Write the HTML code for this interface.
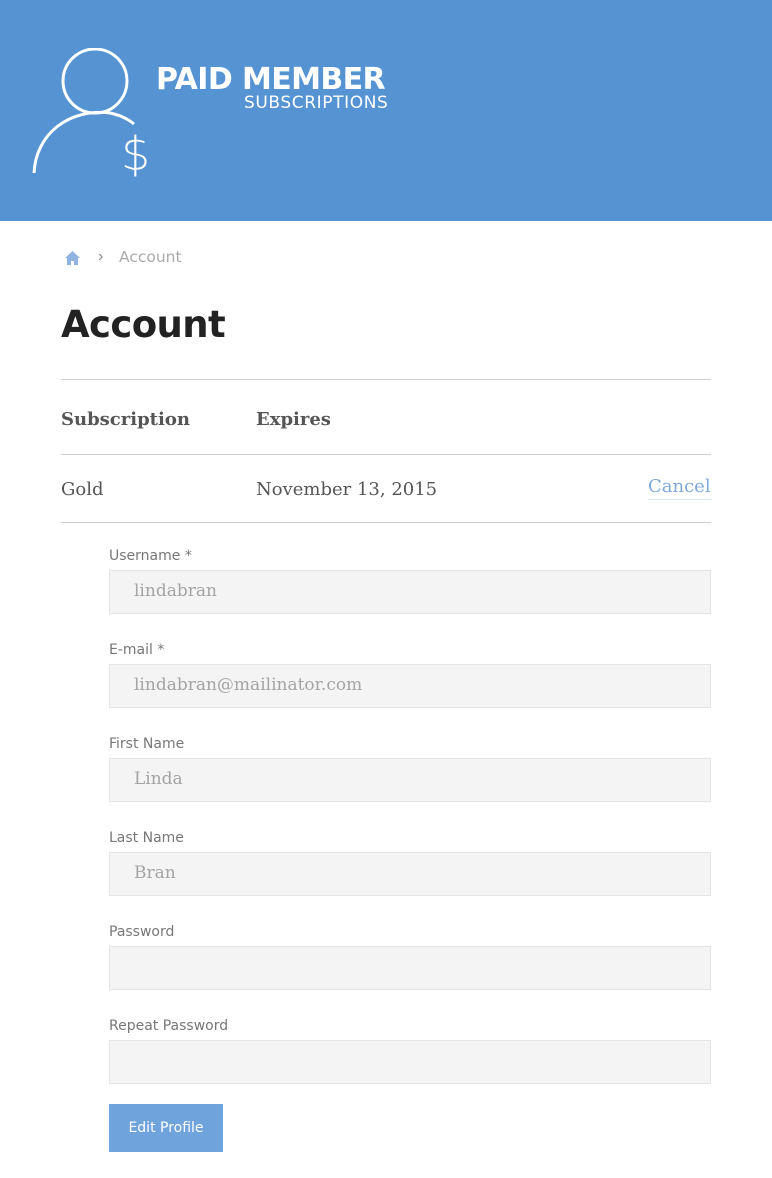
<!DOCTYPE html>
<html><head><meta charset="utf-8"><style>
*{margin:0;padding:0;box-sizing:border-box}
body{width:772px;height:1178px;background:#fff;font-family:"Liberation Sans",sans-serif;position:relative;overflow:hidden}
.hdr{position:absolute;left:0;top:0;width:772px;height:221px;background:#5593d3}
.abs{position:absolute}
.serif{font-family:"DejaVu Serif","Liberation Serif",serif}
.line{position:absolute;left:61px;width:650px;height:1px;background:#cfcfcf}
.lbl{position:absolute;left:109px;color:#777;font-family:"DejaVu Sans","Liberation Sans",sans-serif;font-size:14px}
.inp{position:absolute;left:109px;width:602px;height:44px;background:#f4f4f4;border:1px solid #e4e4e4;font-family:"DejaVu Serif",serif;font-size:17px;color:#a4a4a4;padding:10px 24px}
</style></head><body>
<div class="hdr">
<svg class="abs" style="left:30px;top:48px" width="130" height="130" viewBox="0 0 130 130">
<circle cx="65" cy="33" r="32" fill="none" stroke="#fff" stroke-width="3"/>
<path d="M4 125 C6 85 40 60 80 65 C90 67 98 71 104 76" fill="none" stroke="#fff" stroke-width="3"/>
<text x="91" y="122" font-family="DejaVu Sans,sans-serif" font-size="46" fill="#fff" font-weight="300">$</text>
</svg>
<div class="abs" style="left:156px;top:62px;font-family:'DejaVu Sans',sans-serif;font-weight:bold;font-size:30px;color:#fff;letter-spacing:-0.6px">PAID MEMBER</div>
<div class="abs" style="left:244px;top:93px;font-family:'DejaVu Sans',sans-serif;font-size:17px;color:#fff;letter-spacing:0.6px">SUBSCRIPTIONS</div>
</div>
<svg class="abs" style="left:65px;top:251px" width="15" height="14" viewBox="0 0 15 14"><path d="M7.5 0 L15 7 L13 7 L13 14 L9 14 L9 10 L6 10 L6 14 L2 14 L2 7 L0 7Z" fill="#8fb4e2"/></svg>
<div class="abs" style="left:98px;top:248px;font-size:16px;color:#888">›</div>
<div class="abs" style="left:119px;top:248px;font-family:'DejaVu Sans',sans-serif;font-size:15.5px;color:#aaa">Account</div>
<div class="abs" style="left:61px;top:303px;font-family:'DejaVu Sans',sans-serif;font-weight:bold;font-size:37px;color:#222;letter-spacing:-0.6px">Account</div>
<div class="line" style="top:379px"></div>
<div class="abs serif" style="left:61px;top:409px;font-size:18px;font-weight:bold;color:#555">Subscription</div>
<div class="abs serif" style="left:256px;top:409px;font-size:18px;font-weight:bold;color:#555">Expires</div>
<div class="line" style="top:454px"></div>
<div class="abs serif" style="left:61px;top:479px;font-size:18px;color:#555">Gold</div>
<div class="abs serif" style="left:256px;top:479px;font-size:18px;color:#555">November 13, 2015</div>
<div class="abs serif" style="left:648px;top:476px;font-size:18px;color:#7fa9dc;border-bottom:1px solid #dde8f5;padding-bottom:2px">Cancel</div>
<div class="line" style="top:522px"></div>
<div class="lbl" style="top:548px">Username *</div>
<div class="inp" style="top:570px">lindabran</div>
<div class="lbl" style="top:642px">E-mail *</div>
<div class="inp" style="top:664px">lindabran@mailinator.com</div>
<div class="lbl" style="top:736px">First Name</div>
<div class="inp" style="top:758px">Linda</div>
<div class="lbl" style="top:830px">Last Name</div>
<div class="inp" style="top:852px">Bran</div>
<div class="lbl" style="top:924px">Password</div>
<div class="inp" style="top:946px"></div>
<div class="lbl" style="top:1018px">Repeat Password</div>
<div class="inp" style="top:1040px"></div>
<div class="abs" style="left:109px;top:1104px;width:114px;height:48px;background:#6fa3dc;color:#fff;font-family:'DejaVu Sans',sans-serif;font-size:14px;text-align:center;line-height:48px">Edit Profile</div>
</body></html>
